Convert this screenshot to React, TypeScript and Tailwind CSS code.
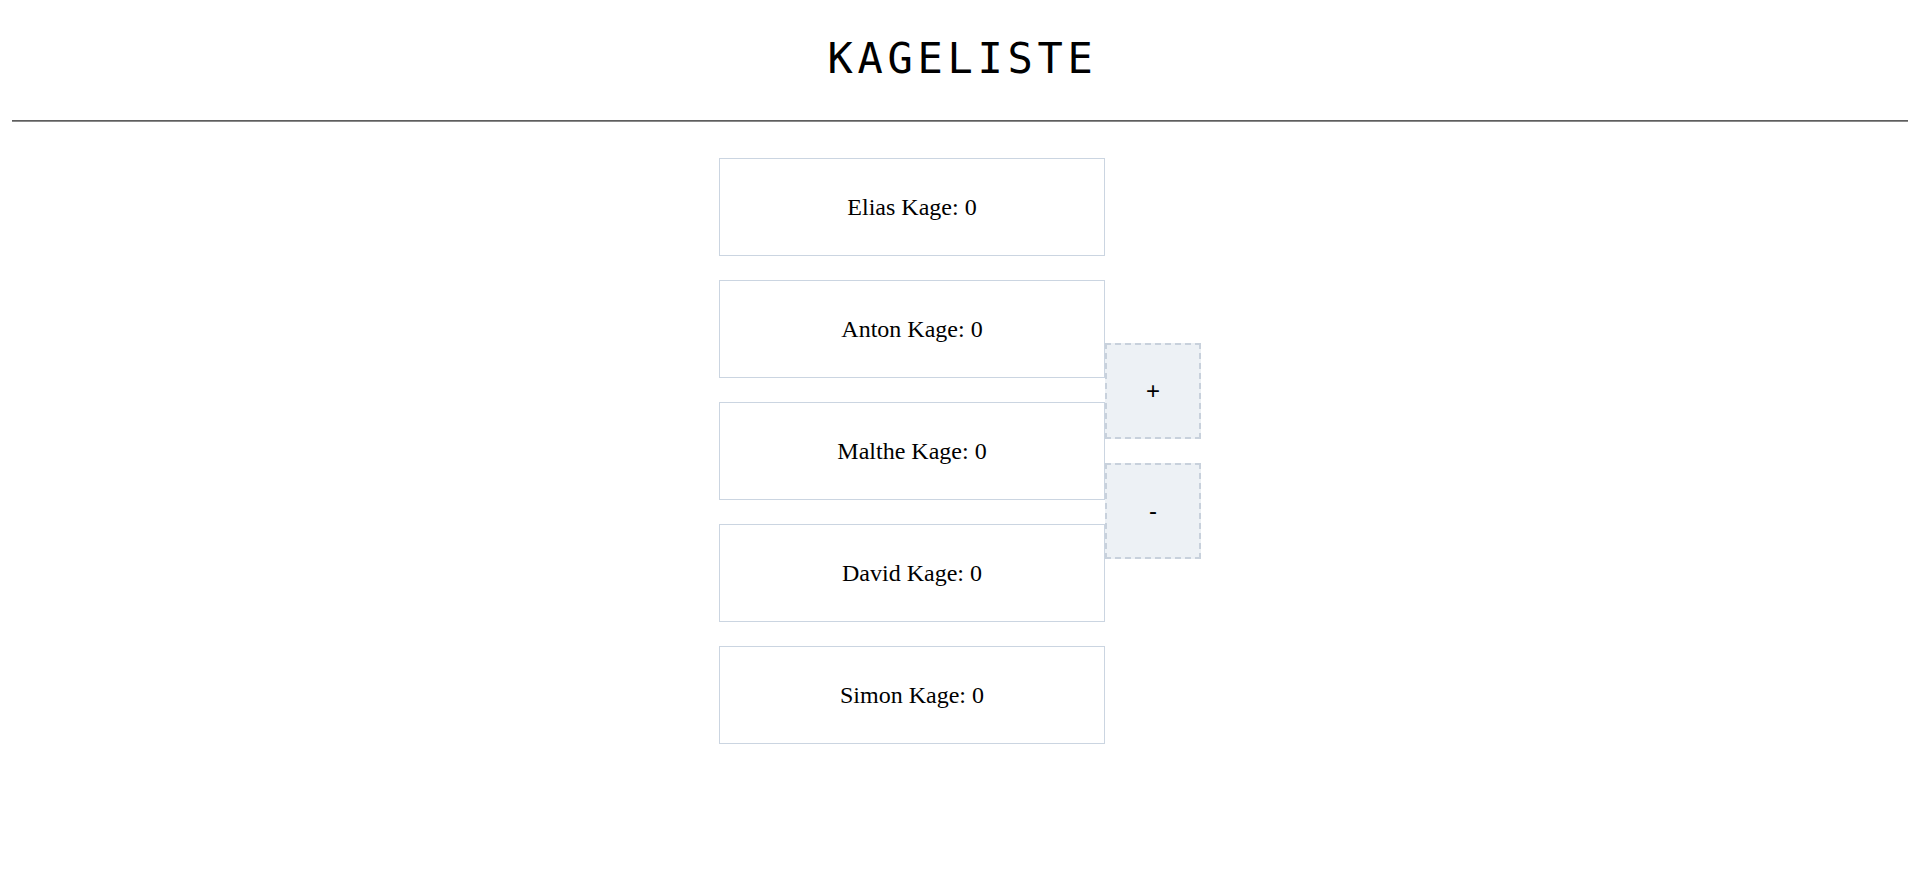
const people = ["Elias", "Anton", "Malthe", "David", "Simon"]

function PersonCard({ name, count }: { name: string; count: number }) {
  return (
    <div className="flex h-[98px] w-[386px] items-center justify-center border border-[#cbd5e1] bg-white text-[24px] text-black [font-family:'Liberation_Serif',serif]">
      {name} Kage: {count}
    </div>
  )
}

function CountButton({ label }: { label: string }) {
  return (
    <button className="flex h-[96px] w-[96px] items-center justify-center border-2 border-dashed border-[#c8d1dc] bg-[#edf1f5] text-[24px] text-black [font-family:'Liberation_Sans',Arial,sans-serif]">
      {label}
    </button>
  )
}

export default function App() {
  return (
    <div className="min-h-screen w-full bg-white">
      <header className="pt-[35px]">
        <h1 className="pl-[5px] text-center text-[42px] font-normal leading-[48px] tracking-[4.7px] text-black [font-family:'DejaVu_Sans_Mono',monospace]">
          KAGELISTE
        </h1>
      </header>
      <hr className="mx-3 mt-[37px] h-0 border-t border-b border-t-[#5e5e5e] border-b-[#8a8a8a]" />
      <main className="mt-9 flex items-center justify-center">
        <div className="flex flex-col gap-6">
          {people.map((p) => (
            <PersonCard key={p} name={p} count={0} />
          ))}
        </div>
        <div className="flex flex-col gap-6">
          <CountButton label="+" />
          <CountButton label="-" />
        </div>
      </main>
    </div>
  )
}
